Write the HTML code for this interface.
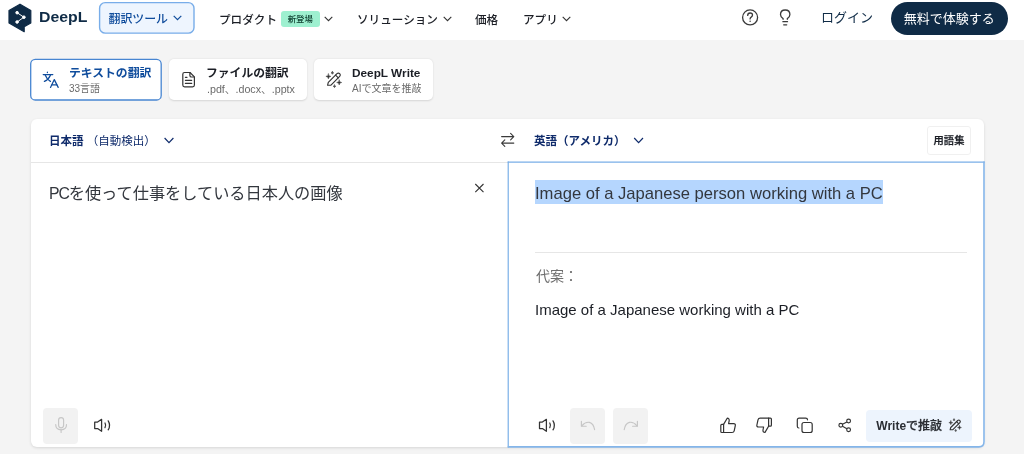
<!DOCTYPE html>
<html lang="ja">
<head>
<meta charset="utf-8">
<title>DeepL翻訳</title>
<style>
*{box-sizing:border-box;margin:0;padding:0}
html,body{width:1024px;height:454px;overflow:hidden;background:#f4f4f4}
.abs{will-change:transform}
body{position:relative;font-family:"Liberation Sans","Noto Sans CJK JP",sans-serif;color:#1b1e25;-webkit-font-smoothing:antialiased}
.abs{position:absolute;white-space:nowrap}
svg{display:block;position:absolute;overflow:visible}
/* header */
#hdr{position:absolute;left:0;top:0;width:1024px;height:40px;background:#fff}
.nav{font-size:11.6px;font-weight:500;color:#1b1e25;line-height:20px;top:9.5px}
#tool{left:99px;top:2px;width:96px;height:31px;border:1px solid transparent;color:#0f4c9c;font-size:11.9px;font-weight:500;line-height:32px;padding-left:8.5px}
#badge{left:281px;top:11px;width:38.5px;height:16px;background:#9ef0d0;border-radius:3px;font-size:8.4px;line-height:16px;text-align:center;color:#0b3b2c;font-weight:500}
#login{left:821px;top:8px;font-size:13px;line-height:20px;color:#0f2b46;font-weight:400}
#cta{left:890.5px;top:1.5px;width:116.5px;height:33px;border-radius:17px;background:#0f2b46;color:#fff;font-size:13px;line-height:34px;text-align:center;font-weight:400}
#brand{left:38.5px;top:6px;font-size:14px;line-height:22px;font-weight:700;color:#0f2b46;transform-origin:0 0;transform:scaleX(1.13)}
/* tabs */
.tab{position:absolute;top:58.5px;height:42px;background:#fff;border-radius:5px;box-shadow:0 0.5px 2px rgba(0,0,0,.13)}
.t1{font-size:11.8px;font-weight:700;line-height:16px;color:#1b1e25}
.t2{font-size:10px;line-height:14px;color:#6a6a6a}
#tab1{left:30.5px;width:131px;top:59px;height:41.4px;box-shadow:none}
#tab2{left:168.5px;width:138px;top:59.3px;height:40.8px}
#tab3{left:314.4px;width:119px;top:59.3px;height:40.8px}
/* card */
#card{position:absolute;left:31px;top:119px;width:953px;height:328px;background:#fff;border-radius:6px;box-shadow:0 1px 3px rgba(0,0,0,.12)}
#cardhdr{position:absolute;left:31px;top:161.5px;width:477px;height:1px;background:#e6e6e6}
.lang{font-size:11.5px;line-height:16px;color:#0f2b6b;top:133.4px}
.lang b{font-weight:700}
#gloss{left:927px;top:125.5px;width:44px;height:29px;border:1px solid #f0f0f0;border-radius:3px;font-size:10.3px;line-height:28px;text-align:center;font-weight:500;color:#1b1e25;background:#fff;-webkit-text-stroke:0.25px #1b1e25}
#right{position:absolute;left:508px;top:162px;width:476.5px;height:285px;border-radius:0 0 6px 0;background:#fff}
#src{left:49px;top:181px;font-size:16.2px;line-height:24px;color:#33373e}
#tgt{left:535px;top:180px;width:348px;height:24px;background:#b5d6fe;font-size:16.6px;line-height:28.4px;color:#33373e;overflow:hidden}
#divider{position:absolute;left:535px;top:252px;width:432px;height:1px;background:#e6e6e6}
#alt{left:535.5px;top:266px;font-size:14px;line-height:20px;color:#6e6e6e}
#alt1{left:534.7px;top:300px;font-size:15px;line-height:20px;color:#1b1e25}
.gbtn{position:absolute;top:408.3px;width:35.3px;height:35.5px;border-radius:4px;background:#f2f2f2}
#write{left:866px;top:410px;width:106px;height:32px;border-radius:4px;background:#edf4fd;font-size:12px;font-weight:500;line-height:32px;padding-left:10.3px;color:#2a2d33;-webkit-text-stroke:0.25px #2a2d33}
#write b{font-weight:700;-webkit-text-stroke:0}
</style>
</head>
<body>
<div id="hdr">
  <svg style="left:0;top:0" width="40" height="40" viewBox="0 0 40 40">
    <path d="M20 4.2 L30.8 10.4 L30.8 22.9 L24.2 26.7 L24.2 31.7 L9 22.9 L9 10.4 Z" fill="#0f2b46" stroke="#0f2b46" stroke-width="1.2" stroke-linejoin="round"/>
    <g stroke="#fff" stroke-width="1" fill="#fff">
      <line x1="17.1" y1="12.7" x2="23.9" y2="17.2"/><line x1="23.9" y1="17.2" x2="17.1" y2="22"/>
      <circle cx="17.1" cy="12.7" r="1.3"/><circle cx="23.9" cy="17.2" r="1.3"/><circle cx="17.1" cy="22" r="1.3"/>
    </g>
  </svg>
  <div class="abs" id="brand">DeepL</div>
  <svg style="left:0;top:0" width="200" height="40" viewBox="0 0 200 40"><rect x="99.6" y="2.65" width="94.4" height="30.5" rx="5.6" fill="#eef5fe" stroke="#78ade9" stroke-width="1.4"/></svg>
  <div class="abs" id="tool">翻訳ツール</div>
  <svg style="left:173px;top:15px" width="9" height="6" viewBox="0 0 9 6"><path d="M0.7 0.8 L4.5 4.6 L8.3 0.8" fill="none" stroke="#0f4c9c" stroke-width="1.2"/></svg>
  <div class="abs nav" style="left:219px">プロダクト</div>
  <div class="abs" id="badge">新登場</div>
  <svg style="left:324px;top:16px" width="9" height="6" viewBox="0 0 9 6"><path d="M0.7 0.8 L4.5 4.6 L8.3 0.8" fill="none" stroke="#333" stroke-width="1.1"/></svg>
  <div class="abs nav" style="left:357px">ソリューション</div>
  <svg style="left:442.5px;top:16px" width="9" height="6" viewBox="0 0 9 6"><path d="M0.7 0.8 L4.5 4.6 L8.3 0.8" fill="none" stroke="#333" stroke-width="1.1"/></svg>
  <div class="abs nav" style="left:475px">価格</div>
  <div class="abs nav" style="left:523px">アプリ</div>
  <svg style="left:562px;top:16px" width="9" height="6" viewBox="0 0 9 6"><path d="M0.7 0.8 L4.5 4.6 L8.3 0.8" fill="none" stroke="#333" stroke-width="1.1"/></svg>
  <!-- help + bulb -->
  <svg style="left:735px;top:0" width="70" height="40" viewBox="735 0 70 40"><g fill="none" stroke="#3a3a3a" stroke-width="1.3" stroke-linecap="round" stroke-linejoin="round">
    <circle cx="750.1" cy="17.4" r="7.5"/>
    <path d="M747.7 15.4 Q747.7 13 750.1 13 Q752.5 13 752.5 15.1 Q752.5 16.4 751.2 17.1 Q750.1 17.7 750.1 18.9"/>
    <path d="M783.1 19.3 V18.6 Q780.5 17.2 780.5 14.6 Q780.5 10 785.2 10 Q789.9 10 789.9 14.6 Q789.9 17.2 787.3 18.6 V19.3"/>
    <path d="M782.9 21.7 H787.5"/><path d="M783.7 24.8 H786.7"/></g>
    <circle cx="750.1" cy="21.2" r="0.75" fill="#3a3a3a"/>
  </svg>
  <div class="abs" id="login">ログイン</div>
  <div class="abs" id="cta">無料で体験する</div>
</div>

<div class="tab" id="tab1"></div>
<div class="tab" id="tab2"></div>
<div class="tab" id="tab3"></div>
<div class="abs t1" style="left:69px;top:64.5px;color:#0f4c9c">テキストの翻訳</div><div class="abs t2" style="left:69px;top:81.6px">33言語</div>
<div class="abs t1" style="left:206px;top:64.5px">ファイルの翻訳</div><div class="abs t2" style="left:207px;top:81.6px;font-size:10.7px">.pdf、.docx、.pptx</div>
<div class="abs t1" style="left:352px;top:64.5px">DeepL Write</div><div class="abs t2" style="left:352px;top:81.6px">AIで文章を推敲</div>

<div id="card"></div>
<div id="cardhdr"></div>
<div id="right"></div>
<div class="abs lang" style="left:49.2px"><b>日本語</b> （自動検出）</div>
<div class="abs lang" style="left:533.5px"><b>英語（アメリカ）</b></div>
<div class="abs" id="gloss">用語集</div>
<div class="abs" id="src"><span style="letter-spacing:-1.1px;font-size:15.8px">PC</span>を使って仕事をしている日本人の画像</div>
<div class="abs" id="tgt">Image of a Japanese person working with a PC</div>
<div id="divider"></div>
<div class="abs" id="alt">代案：</div>
<div class="abs" id="alt1">Image of a Japanese working with a PC</div>
<div class="gbtn" style="left:43px"></div>
<div class="gbtn" style="left:570.2px"></div>
<div class="gbtn" style="left:613px"></div>
<div class="abs" id="write"><b>Write</b>で推敲</div>

<svg id="icons" style="left:0;top:0" width="1024" height="454" viewBox="0 0 1024 454">
<!-- tab icons -->
<rect x="30.7" y="59.3" width="130.5" height="40.7" rx="4.6" fill="none" stroke="#4785d1" stroke-width="1.3"/>
<g fill="none" stroke="#0f4c9c" stroke-width="1.25" stroke-linecap="round" stroke-linejoin="round">
  <path d="M43.2 74.5 H52.8"/><path d="M47.4 72.2 V72.6"/>
  <path d="M45.3 75.2 Q47 79.6 50.4 81.4"/><path d="M50.4 75.2 Q48.6 79.6 44.4 81.4"/>
  <path d="M50.5 87.4 L54.3 79.6 L58.2 87.4"/><path d="M51.9 84.8 H56.8"/>
</g>
<g fill="none" stroke="#333" stroke-width="1.2" stroke-linecap="round" stroke-linejoin="round">
  <path d="M184.6 72.5 H190 L194.4 76.9 V85.1 Q194.4 86.9 192.6 86.9 H184.6 Q182.8 86.9 182.8 85.1 V74.3 Q182.8 72.5 184.6 72.5 Z"/>
  <path d="M189.9 72.7 V75.4 Q189.9 77 191.5 77 H194.2"/>
  <path d="M185.4 77.3 H187"/><path d="M185.4 80.3 H191.7"/><path d="M185.4 83.4 H191.7"/>
</g>
<g stroke-width="1.15"><g id="pen" fill="none" stroke="#333" stroke-linecap="round" stroke-linejoin="round">
  <path d="M327.6 85.2 L328.3 82.4 L337 73.7 Q338.3 72.4 339.7 73.7 Q341 75.1 339.7 76.4 L331 85.1 Z"/>
  <path d="M335.6 75.1 L338.3 77.8"/>
  <path fill="#333" stroke-width="0.5" d="M328.4 73.9 Q328.4 76.4 330.9 76.4 Q328.4 76.4 328.4 78.9 Q328.4 76.4 325.9 76.4 Q328.4 76.4 328.4 73.9 Z M332.4 71.5 Q332.4 72.9 333.79999999999995 72.9 Q332.4 72.9 332.4 74.30000000000001 Q332.4 72.9 331.0 72.9 Q332.4 72.9 332.4 71.5 Z M339.2 80.0 Q339.2 82.5 341.7 82.5 Q339.2 82.5 339.2 85.0 Q339.2 82.5 336.7 82.5 Q339.2 82.5 339.2 80.0 Z M334.5 84.89999999999999 Q334.5 86.3 335.9 86.3 Q334.5 86.3 334.5 87.7 Q334.5 86.3 333.1 86.3 Q334.5 86.3 334.5 84.89999999999999 Z"/>
</g></g>
<!-- right panel focus border -->
<path d="M508.2 447.6 V161.5" fill="none" stroke="#6ea8e5" stroke-width="1.1"/>
<path d="M507.7 162.1 H984.8" fill="none" stroke="#78aee7" stroke-width="1.4"/>
<path d="M984 161.5 V441.8 Q984 446.9 978.9 446.9 H507.7" fill="none" stroke="#84b5e9" stroke-width="1.6"/>
<!-- lang chevrons, swap -->
<path d="M164.6 138 L169 142.6 L173.4 138" fill="none" stroke="#0f2b6b" stroke-width="1.2"/>
<path d="M634.2 138 L638.6 142.6 L643 138" fill="none" stroke="#0f2b6b" stroke-width="1.2"/>
<g fill="none" stroke="#3a3a3a" stroke-width="1.1" stroke-linecap="round" stroke-linejoin="round">
  <path d="M501.6 136.6 H513.8 M510.6 133.4 L513.8 136.6 L510.6 139.8"/>
  <path d="M513.8 143.1 H501.6 M504.8 139.9 L501.6 143.1 L504.8 146.3"/>
</g>
<!-- clear X -->
<path d="M475.3 184 L483.5 192.2 M483.5 184 L475.3 192.2" fill="none" stroke="#333" stroke-width="1.1"/>
<!-- mic -->
<g fill="none" stroke="#c6c6c6" stroke-width="1.15" stroke-linecap="round">
  <rect x="58.6" y="417.6" width="5" height="10.2" rx="2.5"/>
  <path d="M55.7 424.6 Q55.7 429.8 61.1 429.8 Q66.5 429.8 66.5 424.6"/><path d="M61.1 429.8 V432.4"/>
</g>
<!-- speakers -->
<g id="spk" fill="none" stroke="#333" stroke-width="1.25" stroke-linecap="round" stroke-linejoin="round">
  <path d="M94.7 422 H97.6 L101.6 419.3 V431.3 L97.6 428.6 H94.7 Z"/>
  <path d="M105 423 Q106.4 425.3 105 427.6"/>
  <path d="M108.2 420.8 Q111 425.3 108.2 429.8"/>
</g>
<use href="#spk" x="444.8" y="0"/>
<!-- undo / redo -->
<g fill="none" stroke="#c6c6c6" stroke-width="1.15" stroke-linecap="round" stroke-linejoin="round">
  <path d="M581.4 421.2 V426.2 H586.2"/><path d="M581.8 425.8 Q585.4 421.6 589.4 422.4 Q593.6 423.4 594.6 429.6"/>
  <path d="M637.4 421.2 V426.2 H632.6"/><path d="M637 425.8 Q633.4 421.6 629.4 422.4 Q625.2 423.4 624.2 429.6"/>
</g>
<!-- thumbs -->
<g id="thumb" fill="none" stroke="#333" stroke-width="1.2" stroke-linecap="round" stroke-linejoin="round">
  <path d="M723.6 424.4 H721.8 Q720.8 424.4 720.8 425.4 V431.5 Q720.8 432.5 721.8 432.5 H723.6 Z"/>
  <path d="M723.6 424.4 L727.2 418.2 Q729.4 418.2 729.2 420.6 L728.6 423.6 H733.6 Q735.7 423.6 735.3 425.6 L734.2 430.8 Q733.8 432.5 732 432.5 H723.6"/>
</g>
<use href="#thumb" transform="rotate(180 746.1 425.3)"/>
<!-- copy -->
<g fill="none" stroke="#333" stroke-width="1.2" stroke-linecap="round" stroke-linejoin="round">
  <rect x="802" y="422.5" width="10.2" height="10" rx="2"/>
  <path d="M798.9 428 Q797.3 428 797.3 426.2 V420 Q797.3 418.1 799.2 418.1 H805.6 Q807.5 418.1 807.5 419.8"/>
</g>
<!-- share -->
<g fill="none" stroke="#333" stroke-width="1.15">
  <circle cx="840.8" cy="425.3" r="1.9"/><circle cx="848.6" cy="421" r="1.9"/><circle cx="848.6" cy="429.7" r="1.9"/>
  <path d="M842.5 424.3 L846.9 421.9 M842.5 426.3 L846.9 428.7"/>
</g>
<use href="#pen" stroke-width="1.45" transform="translate(948.9 419) scale(0.8) translate(-326 -71.8)"/>
</svg>
</body>
</html>
